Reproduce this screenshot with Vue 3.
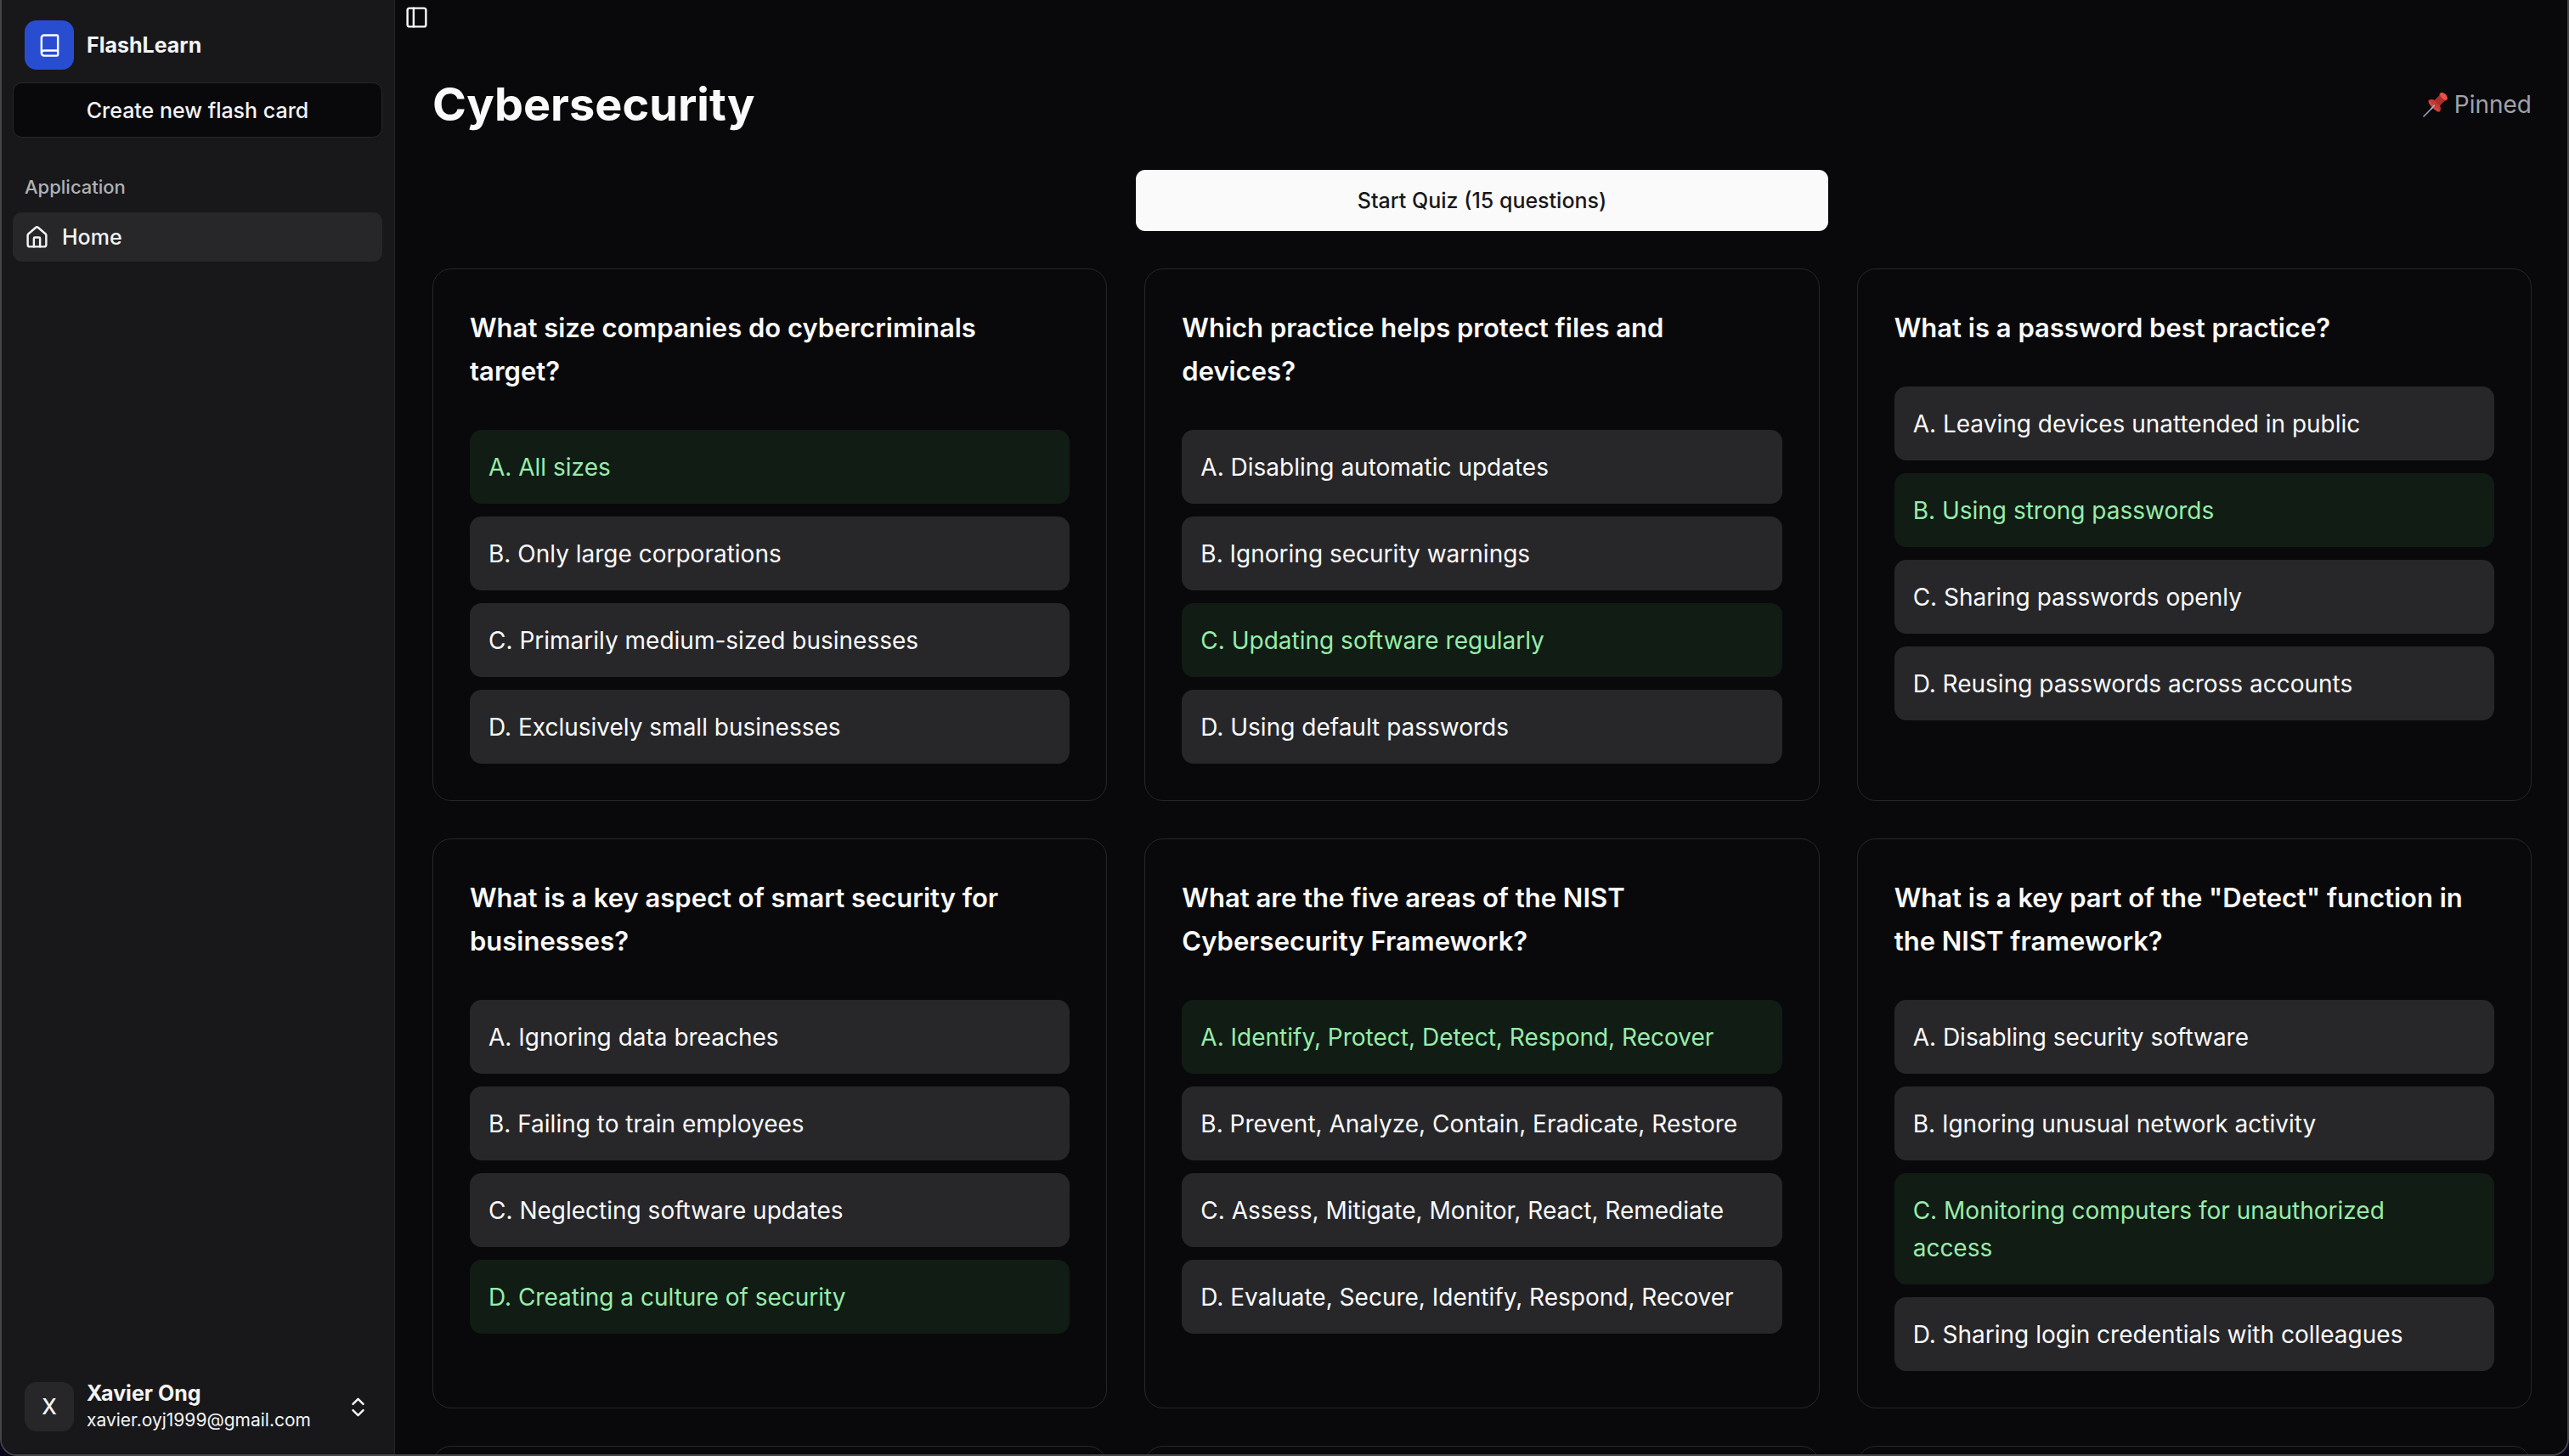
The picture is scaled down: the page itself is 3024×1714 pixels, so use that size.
<script setup>
const letters = ['A', 'B', 'C', 'D']

const cards = [
  {
    question: 'What size companies do cybercriminals target?',
    options: ['All sizes', 'Only large corporations', 'Primarily medium-sized businesses', 'Exclusively small businesses'],
    answer: 0,
  },
  {
    question: 'Which practice helps protect files and devices?',
    options: ['Disabling automatic updates', 'Ignoring security warnings', 'Updating software regularly', 'Using default passwords'],
    answer: 2,
  },
  {
    question: 'What is a password best practice?',
    options: ['Leaving devices unattended in public', 'Using strong passwords', 'Sharing passwords openly', 'Reusing passwords across accounts'],
    answer: 1,
  },
  {
    question: 'What is a key aspect of smart security for businesses?',
    options: ['Ignoring data breaches', 'Failing to train employees', 'Neglecting software updates', 'Creating a culture of security'],
    answer: 3,
  },
  {
    question: 'What are the five areas of the NIST Cybersecurity Framework?',
    options: [
      'Identify, Protect, Detect, Respond, Recover',
      'Prevent, Analyze, Contain, Eradicate, Restore',
      'Assess, Mitigate, Monitor, React, Remediate',
      'Evaluate, Secure, Identify, Respond, Recover',
    ],
    answer: 0,
  },
  {
    question: 'What is a key part of the "Detect" function in the NIST framework?',
    options: [
      'Disabling security software',
      'Ignoring unusual network activity',
      'Monitoring computers for unauthorized access',
      'Sharing login credentials with colleagues',
    ],
    answer: 2,
  },
]
</script>

<template>
  <div class="window">
    <aside class="sidebar">
      <header class="brand">
        <span class="tile logo">
          <svg class="icon" viewBox="0 0 24 24" aria-hidden="true">
            <path d="M4 19.5v-15A2.5 2.5 0 0 1 6.5 2H19a1 1 0 0 1 1 1v18a1 1 0 0 1-1 1H6.5a1 1 0 0 1 0-5H20" />
          </svg>
        </span>
        <span class="strong">FlashLearn</span>
      </header>
      <button type="button" class="create">Create new flash card</button>

      <nav class="nav">
        <h2 class="nav-label">Application</h2>
        <a href="#" class="nav-item">
          <svg class="icon" viewBox="0 0 24 24" aria-hidden="true">
            <path d="M15 21v-8a1 1 0 0 0-1-1h-4a1 1 0 0 0-1 1v8" />
            <path d="M3 10a2 2 0 0 1 .709-1.528l7-5.999a2 2 0 0 1 2.582 0l7 5.999A2 2 0 0 1 21 10v9a2 2 0 0 1-2 2H5a2 2 0 0 1-2-2z" />
          </svg>
          <span>Home</span>
        </a>
      </nav>

      <button type="button" class="user">
        <span class="tile avatar">X</span>
        <span class="user-text">
          <span class="strong">Xavier Ong</span>
          <span class="email">xavier.oyj1999@gmail.com</span>
        </span>
        <svg class="icon" viewBox="0 0 24 24" aria-hidden="true">
          <path d="m7 15 5 5 5-5" />
          <path d="m7 9 5-5 5 5" />
        </svg>
      </button>
    </aside>

    <main class="main">
      <div class="topbar">
        <button type="button" class="toggle" aria-label="Toggle sidebar">
          <svg class="icon" viewBox="0 0 24 24" aria-hidden="true">
            <rect x="3" y="3" width="18" height="18" rx="2" />
            <path d="M9 3v18" />
          </svg>
        </button>
      </div>

      <div class="content">
        <header class="heading">
          <h1>Cybersecurity</h1>
          <button type="button" class="pinned">
            <svg class="pin" viewBox="0 0 30 30" aria-hidden="true">
              <path d="M13.5 16.5 1 29" stroke="#8ea3b5" stroke-width="1.6" stroke-linecap="round" />
              <path d="M6.6 10.2C8.400 8.600 11.400 8.700 13.800 10L19.500 4.500C19.200 2.600 20 1.200 21.600 1.100C25 1 29 5 28.800 8.400C28.700 9.900 27.400 10.700 25.600 10.400L20 16.200C21.300 18.800 21.300 21.600 19.700 23.400C18.600 24.300 14.800 22.600 11.300 18.900C7.700 15.200 5.700 11.400 6.600 10.200Z" fill="#c43a34" />
              <path d="M19.500 4.500C21 7 23 9.200 25.600 10.400L20 16.200C17.300 15 15 12.800 13.800 10Z" fill="#a92d2b" />
              <ellipse cx="24.600" cy="5.200" rx="5" ry="3" transform="rotate(45 24.600 5.200)" fill="#e5534a" />
              <path d="M8 11.500C9.500 15 13 19 17.800 21.500" stroke="#dd4b43" stroke-width="1.600" fill="none" stroke-linecap="round" />
              <path d="M13.800 15.600 9.500 20.500" stroke="#9db2c3" stroke-width="1.600" />
            </svg>
            <span>Pinned</span>
          </button>
        </header>

        <button type="button" class="start">Start Quiz (15 questions)</button>

        <section class="grid">
          <article v-for="card in cards" :key="card.question" class="card">
            <h3>{{ card.question }}</h3>
            <ul>
              <li
                v-for="(option, i) in card.options"
                :key="option"
                :class="{ correct: i === card.answer }"
              >{{ letters[i] }}. {{ option }}</li>
            </ul>
          </article>
          <article v-for="n in 3" :key="n" class="card upcoming"></article>
        </section>
      </div>
    </main>
  </div>
</template>

<style>
body {
  margin: 0;
  background: #08061a;
}
</style>

<style scoped>
* {
  box-sizing: border-box;
}

button {
  font: inherit;
  color: inherit;
  background: none;
  border: 0;
  padding: 0;
  cursor: pointer;
}

h1,
h2,
h3,
ul {
  margin: 0;
  padding: 0;
}

.window {
  display: flex;
  height: 100vh;
  overflow: hidden;
  border: 2px solid #454547;
  border-top: 0;
  border-radius: 0 0 20px 20px;
  background: #09090b;
  color: #fafafa;
  font-family: Inter, "Liberation Sans", sans-serif;
  font-size: 25px;
  line-height: 36px;
}

.icon {
  flex: none;
  width: 29px;
  height: 29px;
  fill: none;
  stroke: currentColor;
  stroke-width: 2;
  stroke-linecap: round;
  stroke-linejoin: round;
}

/* Sidebar */
.sidebar {
  flex: none;
  display: flex;
  flex-direction: column;
  width: 463px;
  padding: 24px 14px 13px 13px;
  background: #18181a;
  border-right: 1px solid #27272a;
  color: #f4f4f5;
}

.brand {
  display: flex;
  align-items: center;
  gap: 15px;
  padding: 0 14px;
}

.tile {
  flex: none;
  display: flex;
  align-items: center;
  justify-content: center;
  width: 58px;
  height: 58px;
  border-radius: 14px;
}

.logo {
  background: #294dd1;
  color: #ffffff;
}

.avatar {
  background: #27272a;
  font-weight: 500;
}

.strong {
  font-weight: 700;
}

.create {
  height: 65px;
  margin-top: 15px;
  border: 1px solid #27272a;
  border-radius: 11px;
  background: #09090b;
  font-weight: 500;
}

.nav {
  flex: 1;
  margin-top: 29px;
}

.nav-label {
  padding: 0 14px;
  color: #b1b1b3;
  font-size: 22px;
  font-weight: 500;
  line-height: 59px;
}

.nav-item {
  display: flex;
  align-items: center;
  gap: 15px;
  height: 58px;
  padding: 0 14px;
  border-radius: 11px;
  background: #27272a;
  color: inherit;
  font-weight: 500;
  text-decoration: none;
}

.user {
  display: flex;
  align-items: center;
  gap: 15px;
  height: 86px;
  padding: 0 14px;
  text-align: left;
}

.user-text {
  flex: 1;
  display: flex;
  flex-direction: column;
  line-height: 31px;
}

.email {
  font-size: 21px;
}

/* Main area */
.main {
  flex: 1;
  min-width: 0;
}

.topbar {
  display: flex;
  align-items: flex-start;
  height: 46px;
  padding: 0 5px;
}

.toggle {
  display: flex;
  padding: 6px;
}

.content {
  display: flex;
  flex-direction: column;
  gap: 44px;
  padding: 44px 42px 44px 44px;
}

.heading {
  display: flex;
  align-items: center;
  justify-content: space-between;
}

h1 {
  font-size: 54px;
  font-weight: 700;
  line-height: 66px;
}

.pinned {
  display: flex;
  align-items: center;
  gap: 7px;
  color: #a1a1aa;
  font-size: 28px;
}

.pin {
  width: 30px;
  height: 30px;
  fill: none;
}

.start {
  align-self: center;
  width: 33%;
  height: 72px;
  border-radius: 11px;
  background: #fafafa;
  color: #18181b;
  font-weight: 500;
}

.grid {
  display: grid;
  grid-template-columns: repeat(3, minmax(0, 1fr));
  gap: 44px;
}

.card {
  padding: 43px;
  border: 1px solid #27272a;
  border-radius: 22px;
}

.upcoming {
  min-height: 627px;
}

h3 {
  margin-bottom: 44px;
  font-size: 31px;
  font-weight: 600;
  line-height: 51px;
}

ul {
  display: flex;
  flex-direction: column;
  gap: 15px;
  list-style: none;
}

li {
  padding: 22px 36px 21px 22px;
  border-radius: 14px;
  background: #27272a;
  font-size: 28px;
  line-height: 44px;
}

.correct {
  background: #111c14;
  color: #97ecab;
}
</style>
